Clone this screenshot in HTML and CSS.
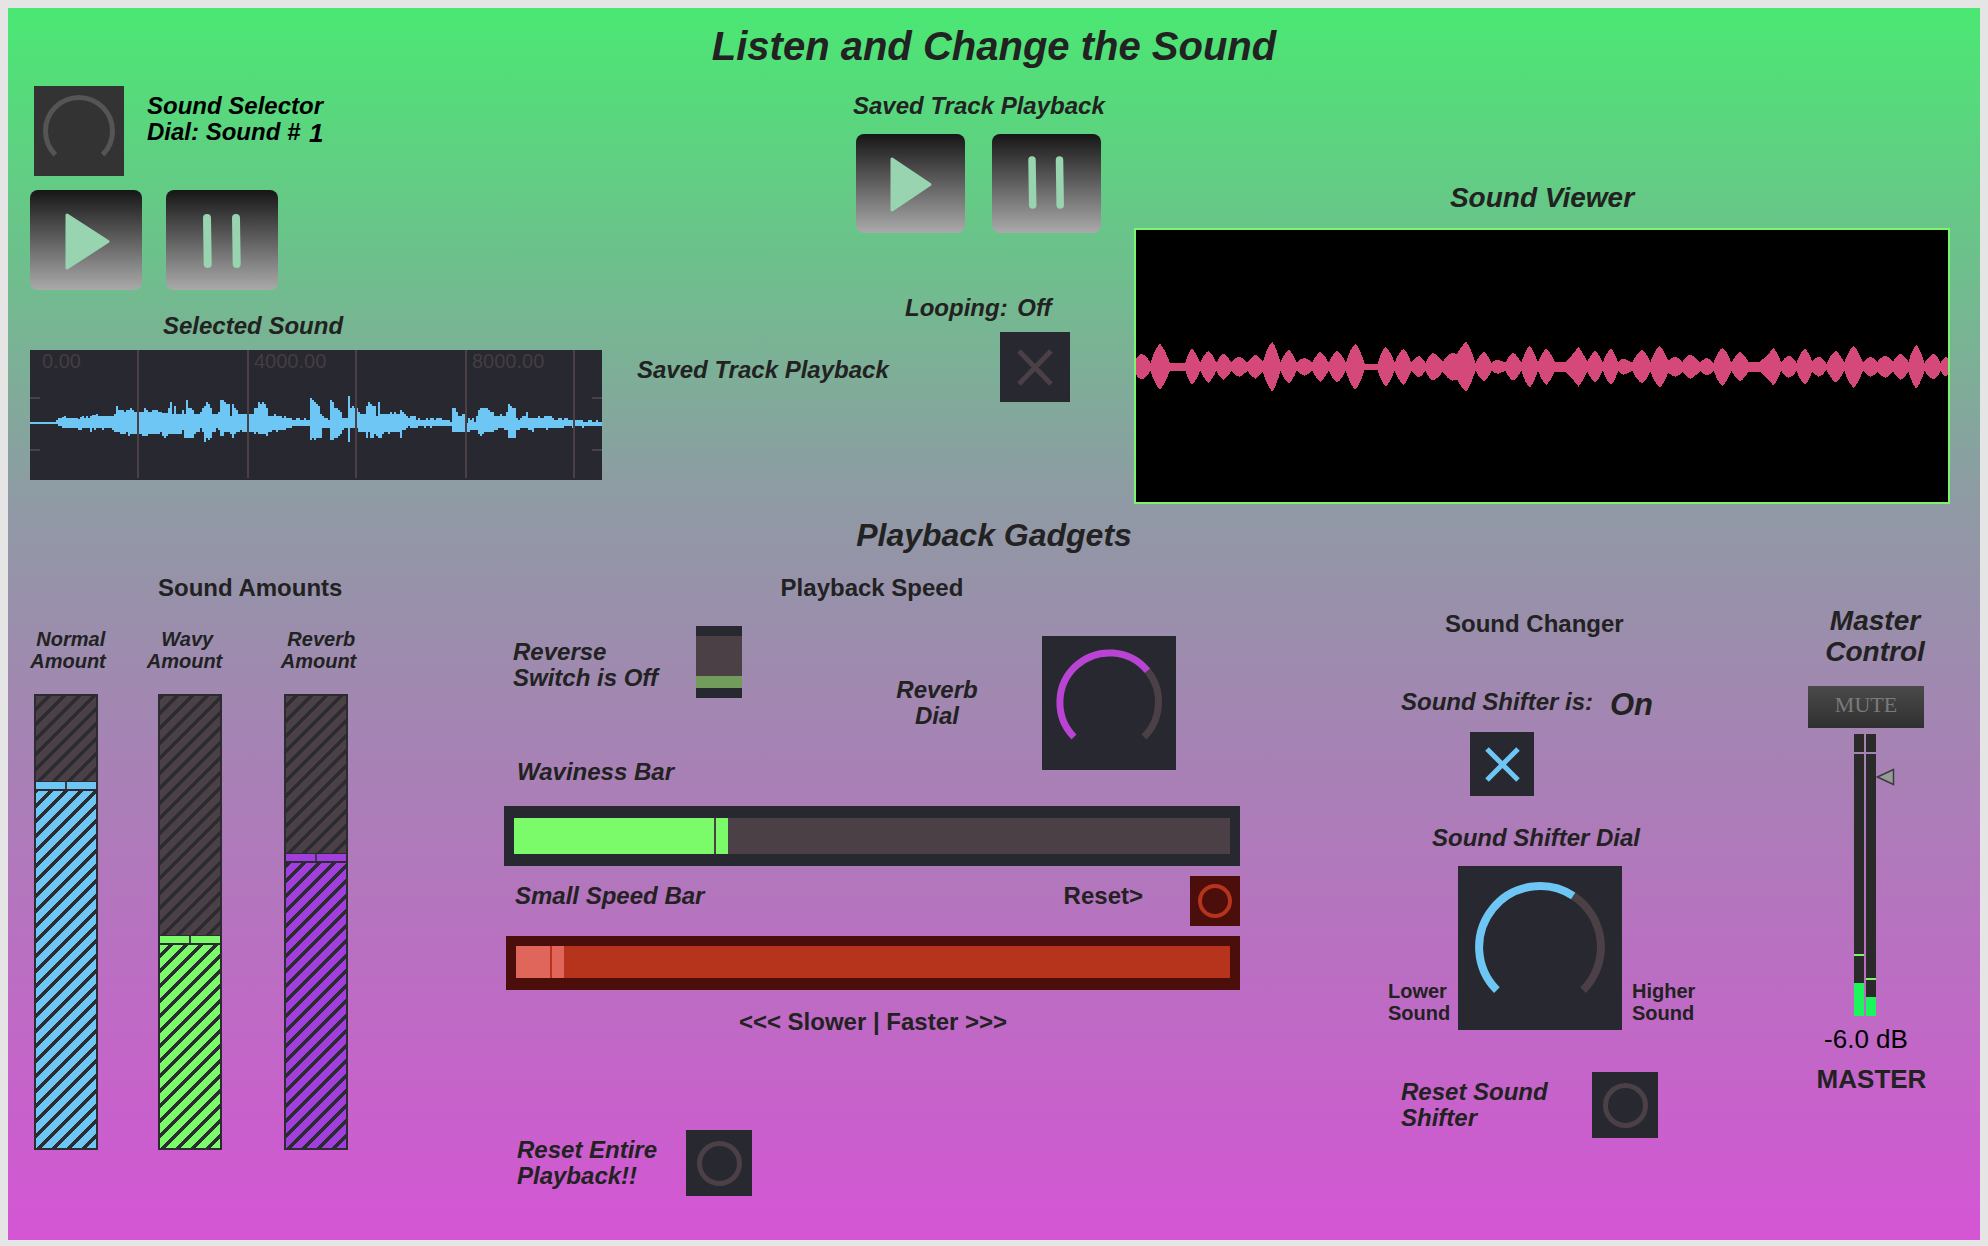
FILE: index.html
```html
<!DOCTYPE html>
<html lang="en">
<head>
    <meta charset="UTF-8">
    <title>Listen and Change the Sound</title>
    <link rel="stylesheet" href="styles.css">
</head>
<body>
<main class="panel">
    <h1 class="title">Listen and Change the Sound</h1>

    <section class="top-row">
        <div class="col-selector">
            <div class="selector">
                <svg class="selector-dial" viewBox="0 0 90 90"><path d="M21.3 68.7A33.5 33.5 0 1 1 68.7 68.7" fill="none" stroke="#555" stroke-width="5"/></svg>
                <p class="selector-text">Sound Selector<br>Dial: Sound # <span class="selector-num">1</span></p>
            </div>
            <div class="transport">
                <button class="transport-btn"><svg viewBox="0 0 112 100"><polygon points="37,25 78,51.5 37,78" fill="#98d4b0" stroke="#98d4b0" stroke-width="3" stroke-linejoin="round"/></svg></button>
                <button class="transport-btn"><svg viewBox="0 0 112 100"><path d="M41 28L41.700 74M70 28L70.700 74" stroke="#98d4b0" stroke-width="8" stroke-linecap="round"/></svg></button>
            </div>
            <h3 class="label selected-label">Selected Sound</h3>
            <svg class="wave" viewBox="0 0 572 130">
                <g fill="#6ec6f5" shape-rendering="crispEdges">
                    <path transform="translate(0,30) scale(.33333)" d="M0 126H78V120H84V114H96V111H102V108H108V114H144V117H150V111H156V108H162V114H168V108H174V114H180V108H186V105H198V102H204V108H252V102H258V78H264V90H282V96H288V90H300V84H306V90H312V96H342V84H348V90H354V96H366V90H384V96H396V98H414V84H420V66H426V102H432V78H438V102H456V90H462V102H468V60H474V84H486V90H492V102H510V96H516V84H522V78H528V66H534V72H540V84H546V102H564V96H570V60H582V66H588V72H600V108H606V72H612V84H618V90H624V102H672V84H684V66H690V72H696V66H702V72H708V84H714V108H732V102H738V108H756V114H762V108H768V114H786V120H798V114H810V120H822V114H828V120H840V54H846V60H852V66H858V72H864V78H870V174H858V180H852V174H846V180H840V138H786V144H768V150H744V156H738V150H726V156H714V168H708V162H684V156H678V162H672V156H636V150H630V156H618V162H612V174H606V162H600V156H582V168H570V150H564V144H558V156H546V174H540V180H534V174H528V186H522V156H516V144H510V156H498V162H492V174H462V150H456V162H414V168H408V174H402V168H396V156H390V162H354V168H336V162H300V168H294V156H288V162H270V156H252V150H246V144H222V150H216V144H198V150H192V144H186V156H180V144H156V150H144V144H96V138H84V132H0Z"/>
                    <path transform="translate(286,30) scale(.33333)" d="M0 78H6V84H12V102H18V108H24V114H36V120H42V60H48V66H54V84H66V90H72V96H78V114H96V48H102V84H108V78H114V84H126V96H132V102H150V78H156V66H162V72H168V78H180V108H186V66H192V102H222V96H228V102H234V96H240V102H252V90H258V96H264V102H270V108H276V114H282V108H300V120H306V114H312V120H330V114H336V120H342V114H354V120H360V114H378V120H402V126H408V84H420V96H426V108H438V102H446V130H456V114H462V120H468V114H474V126H480V108H486V90H492V84H516V90H522V96H534V108H552V102H558V108H570V96H576V72H582V78H588V84H600V114H606V120H612V114H618V108H630V96H636V114H666V108H672V114H684V108H708V114H714V120H726V114H738V120H744V114H756V120H800V126H816V120H828V126H840V120H846V126H858V138H804V144H798V138H774V144H768V138H744V144H696V150H690V144H654V156H648V150H636V144H612V150H600V174H576V150H564V144H546V150H534V156H504V162H498V168H492V162H486V150H462V156H408V138H348V144H342V138H330V144H324V138H306V144H282V138H276V144H270V150H258V174H252V156H222V162H216V156H204V162H198V174H186V168H180V162H174V174H162V156H156V174H150V156H126V144H102V186H96V144H84V150H78V162H72V168H66V174H54V180H42V144H18V174H12V168H0Z"/>
                </g>
                <path d="M108 0V128M218 0V128M326 0V128M436 0V128M544 0V128M0 48H10M0 100H10M562 48H572M562 100H572" stroke="#4a4045" stroke-width="2" fill="none"/>
                <text class="wave-num" x="12" y="18">0.00</text>
                <text class="wave-num" x="224" y="18">4000.00</text>
                <text class="wave-num" x="442" y="18">8000.00</text>
            </svg>
        </div>

        <div class="col-saved">
            <h3 class="label saved-label">Saved Track Playback</h3>
            <div class="transport transport-small">
                <button class="transport-btn"><svg viewBox="0 0 109 99"><polygon points="36,25 74,50.5 36,76" fill="#98d4b0" stroke="#98d4b0" stroke-width="3" stroke-linejoin="round"/></svg></button>
                <button class="transport-btn"><svg viewBox="0 0 109 99"><path d="M40 26L40.700 71M67.500 26L68.200 71" stroke="#98d4b0" stroke-width="7.500" stroke-linecap="round"/></svg></button>
            </div>
            <h3 class="label looping-label">Looping: <span class="looping-state">Off</span></h3>
            <div class="loop-row">
                <h3 class="label loop-text">Saved Track Playback</h3>
                <svg class="toggle toggle-loop" viewBox="0 0 70 70"><path d="M19 19L51 52M51 19L19 52" stroke="#4a4045" stroke-width="5"/></svg>
            </div>
        </div>

        <div class="col-viewer">
            <h3 class="label viewer-label">Sound Viewer</h3>
            <svg class="viewer" viewBox="0 0 812 272">
                <defs>
                    <path id="lobes" d="M29 0V-8Q33 -12 40 -13Q48 -11 55 -4Q63 -18 72 -23Q81 -18 90 -4H118Q124 -15 130 -18Q137 -15 145 -4Q152 -13 160 -16Q167 -13 174 -4Q180 -11 187 -13Q194 -11 201 -4Q208 -9 215 -10Q222 -9 230 -4Q237 -10 245 -12Q251 -10 258 -5Q266 -20 275 -25Q282 -20 290 -4Q297 -14 305 -17Q312 -14 319 -4Q326 -8 333 -9Q340 -8 347 -4Q354 -12 362 -15Q369 -12 377 -4Q384 -13 392 -16Q400 -13 408 -4Q416 -19 425 -23Q433 -19 442 -3H465Q472 -16 480 -20Q488 -16 496 -4Q504 -15 512 -18Q519 -15 526 -4Q533 -9 540 -11Q546 -9 552 -4Q558 -12 565 -14Q574 -12 583 -5Q591 -12 600 -14Q605 -13 609 -13Q617 -21 625 -25Q633 -20 642 -4Q650 -12 658 -15Q664 -12 671 -4Q677 -7 683 -7Q689 -6 696 -4Q703 -12 710 -14Q717 -12 725 -4Q732 -17 740 -21Q747 -17 755 -4Q762 -15 770 -18Q777 -15 785 -5H805Q818 -12 828 -20Q836 -14 844 -5Q851 -13 858 -16Q865 -13 872 -4Q879 -15 887 -18Q893 -15 900 -4Q905 -8 910 -8Q917 -7 925 -4Q934 -14 943 -17Q950 -14 958 -5Q966 -17 975 -21Q982 -17 990 -6Q996 -9 1003 -10Q1010 -9 1016 -5Q1023 -11 1030 -12Q1039 -10 1048 -4Q1054 -8 1060 -9Q1066 -8 1072 -4Q1080 -16 1088 -19Q1096 -16 1104 -4Q1112 -12 1120 -15Q1127 -12 1135 -5H1155Q1170 -11 1180 -19Q1187 -15 1194 -4Q1201 -10 1208 -11Q1215 -10 1222 -4Q1229 -15 1237 -18Q1244 -15 1250 -5Q1256 -9 1262 -10Q1269 -9 1276 -3Q1284 -13 1293 -16Q1300 -13 1308 -4Q1316 -17 1325 -21Q1333 -17 1342 -4Q1349 -9 1356 -10Q1362 -9 1368 -5Q1375 -10 1382 -11Q1389 -10 1396 -5Q1403 -11 1410 -13Q1417 -11 1424 -5Q1431 -18 1438 -22Q1445 -18 1453 -4Q1461 -11 1470 -13Q1476 -11 1482 -4Q1487 -9 1492 -10L1495 -8V0Z"/>
                </defs>
                <g transform="translate(-16,136.700) scale(.5537,1)" fill="#d4487a" shape-rendering="crispEdges">
                    <use href="#lobes"/>
                    <use href="#lobes" transform="scale(1,-1)"/>
                </g>
            </svg>
        </div>
    </section>

    <h2 class="gadgets-title">Playback Gadgets</h2>

    <section class="bottom-row">
        <div class="col-amounts">
            <h3 class="label plain amounts-title">Sound Amounts</h3>
            <div class="amount-labels">
                <span>&nbsp;Normal<br>Amount</span>
                <span>&nbsp;Wavy<br>Amount</span>
                <span>&nbsp;Reverb<br>Amount</span>
            </div>
            <div class="amount-sliders">
                <div class="slider slider-blue"><div class="slider-rest"></div><div class="slider-knob"></div><div class="slider-fill"></div></div>
                <div class="slider slider-green"><div class="slider-rest"></div><div class="slider-knob"></div><div class="slider-fill"></div></div>
                <div class="slider slider-purple"><div class="slider-rest"></div><div class="slider-knob"></div><div class="slider-fill"></div></div>
            </div>
        </div>

        <div class="col-speed">
            <h3 class="label plain speed-title">Playback Speed</h3>
            <div class="speed-top">
                <div class="speed-left">
                    <div class="reverse-row">
                        <p class="label reverse-text">Reverse<br>Switch is Off</p>
                        <div class="switch"><div class="switch-off"></div><div class="switch-on"></div></div>
                    </div>
                    <h3 class="label waviness-label">Waviness Bar</h3>
                </div>
                <p class="label reverb-text">Reverb<br>Dial</p>
                <svg class="reverb-dial" viewBox="0 0 134 134">
                    <path d="M105.500 34.800A49.500 49.500 0 0 1 102 101" fill="none" stroke="#4a4045" stroke-width="7"/>
                    <path d="M32 101A49.500 49.500 0 1 1 105.500 34.800" fill="none" stroke="#b944d4" stroke-width="7"/>
                </svg>
            </div>
            <div class="bar bar-wavy"><div class="bar-inner"><div class="bar-fill"><i></i></div></div></div>
            <div class="small-row">
                <h3 class="label small-label">Small Speed Bar</h3>
                <span class="label plain reset-small">Reset&gt;</span>
                <div class="ring-box ring-box-red"><div class="ring"></div></div>
            </div>
            <div class="bar bar-speed"><div class="bar-inner"><div class="bar-fill"><i></i></div></div></div>
            <p class="label plain slower">&lt;&lt;&lt; Slower | Faster &gt;&gt;&gt;</p>
            <div class="reset-row">
                <p class="label reset-entire">Reset Entire<br>Playback!!</p>
                <div class="ring-box"><div class="ring"></div></div>
            </div>
        </div>

        <div class="col-shifter">
            <h3 class="label plain changer-title">Sound Changer</h3>
            <div class="shifter-status">
                <span class="label">Sound Shifter is:</span>
                <span class="shifter-on">On</span>
            </div>
            <svg class="toggle toggle-shifter" viewBox="0 0 64 64"><path d="M17 17L48 48M48 17L17 48" stroke="#6ec6f5" stroke-width="5"/></svg>
            <h3 class="label shifter-label">Sound Shifter Dial</h3>
            <div class="shifter-dial-row">
                <span class="side-label side-lower">Lower<br>Sound</span>
                <svg class="shifter-dial" viewBox="0 0 164 164">
                    <path d="M115.200 29.800A61 61 0 0 1 125.100 124.100" fill="none" stroke="#4a4045" stroke-width="8"/>
                    <path d="M38.900 124.100A61 61 0 0 1 115.200 29.800" fill="none" stroke="#6ec6f5" stroke-width="8"/>
                </svg>
                <span class="side-label side-higher">Higher<br>Sound</span>
            </div>
            <div class="reset-shifter-row">
                <p class="label reset-shifter">Reset Sound<br>Shifter</p>
                <div class="ring-box"><div class="ring"></div></div>
            </div>
        </div>

        <div class="col-master">
            <h3 class="master-title">Master<br>Control</h3>
            <button class="mute">MUTE</button>
            <div class="meter">
                <div class="meter-channel">
                    <div class="meter-clip"></div>
                    <div class="meter-bar"><div class="meter-peak meter-peak-l"></div><div class="meter-level meter-level-l"></div></div>
                </div>
                <div class="meter-channel">
                    <div class="meter-clip"></div>
                    <div class="meter-bar"><div class="meter-peak meter-peak-r"></div><div class="meter-level meter-level-r"></div></div>
                </div>
                <svg class="meter-handle" viewBox="0 0 19 18"><polygon points="1.500,9 17.500,1.500 17.500,16.500" fill="#999" stroke="#3c3c3c" stroke-width="1.500"/></svg>
            </div>
            <p class="db-value">-6.0 dB</p>
            <p class="label plain master-name">MASTER</p>
        </div>
    </section>
</main>
</body>
</html>
```
FILE: styles.css
```css
/* General page */
html, body {
    margin: 0;
    padding: 0;
    height: 100%;
    overflow: hidden;
}

body {
    background: #e5e5e5;
    font-family: "Liberation Sans", Arial, sans-serif;
}

h1, h2, h3, p {
    margin: 0;
}

svg {
    display: block;
    flex: none;
}

.panel {
    width: 1972px;
    height: 1232px;
    margin: 8px 8px 6px;
    padding-top: 10px;
    box-sizing: border-box;
    background: linear-gradient(180deg, #4ae873 0%, #8f9aa4 40%, #d455d4 100%);
    color: #222;
}

.title {
    font: italic bold 40px/56px "Liberation Sans", Arial, sans-serif;
    text-align: center;
}

.label {
    font: italic bold 24px/30px "Liberation Sans", Arial, sans-serif;
    white-space: nowrap;
    color: #222;
}

.label.plain {
    font-style: normal;
}

/* Top row */
.top-row {
    display: flex;
    height: 441px;
    padding-left: 22px;
}

.col-selector {
    width: 572px;
    padding-top: 12px;
}

.selector {
    display: flex;
    margin-left: 4px;
}

.selector-dial {
    width: 90px;
    height: 90px;
    background: #333;
}

.selector-text {
    margin: 7px 0 0 23px;
    font: italic bold 24px/26px "Liberation Sans", Arial, sans-serif;
    color: #000;
    white-space: nowrap;
}

.selector-num {
    font-size: 26px;
    margin-left: 2px;
    vertical-align: -2px;
}

.transport {
    display: flex;
    gap: 24px;
    margin-top: 14px;
}

.transport-btn {
    width: 112px;
    height: 100px;
    padding: 0;
    border: none;
    border-radius: 8px;
    background: linear-gradient(180deg, #161616, #aaa);
}

.selected-label {
    margin: 21px 0 0 133px;
}

.wave {
    width: 572px;
    height: 130px;
    margin-top: 9px;
    background: #282830;
}

.wave-num {
    font: 20px "Liberation Sans", Arial, sans-serif;
    fill: #453d42;
}

.col-saved {
    width: 467px;
    margin-left: 35px;
    padding-top: 17px;
}

.saved-label {
    margin-left: 216px;
}

.transport-small {
    gap: 27px;
    margin: 13px 0 0 219px;
}

.transport-small .transport-btn {
    width: 109px;
    height: 99px;
}

.looping-label {
    margin: 60px 0 0 268px;
}

.looping-state {
    margin-left: 3px;
}

.loop-row {
    display: flex;
    margin-top: 9px;
}

.loop-text {
    width: 363px;
    margin-top: 23px;
}

.toggle {
    background: #282830;
}

.toggle-loop {
    width: 70px;
    height: 70px;
}

.col-viewer {
    width: 816px;
    margin-left: 30px;
    padding-top: 109px;
}

.viewer-label {
    font-size: 28px;
    text-align: center;
}

.viewer {
    width: 816px;
    height: 276px;
    margin-top: 15px;
    box-sizing: border-box;
    border: 2px solid #7cf56c;
    background: #000;
}

.gadgets-title {
    font: italic bold 32px/40px "Liberation Sans", Arial, sans-serif;
    text-align: center;
}

/* Bottom row */
.bottom-row {
    display: flex;
    padding-left: 22px;
}

.col-amounts {
    width: 474px;
    padding-top: 18px;
}

.amounts-title {
    margin-left: 128px;
}

.amount-labels {
    display: flex;
    margin: 25px 0 0 -2px;
    font: italic bold 20px/22px "Liberation Sans", Arial, sans-serif;
    text-align: center;
}

.amount-labels span {
    width: 80px;
    white-space: nowrap;
}

.amount-labels span:nth-child(2) {
    margin-left: 36.500px;
}

.amount-labels span:nth-child(3) {
    margin-left: 54px;
}

.amount-sliders {
    display: flex;
    margin: 22px 0 0 4px;
}

.slider {
    display: flex;
    flex-direction: column;
    width: 64px;
    height: 456px;
    box-sizing: border-box;
    border: 2px solid #2b2b31;
}

.slider-green {
    margin-left: 60px;
}

.slider-purple {
    margin-left: 62px;
}

.slider-rest {
    flex: 1;
    background: repeating-linear-gradient(-45deg, #4a4045 0 7px, #2b2b31 7px 10.600px);
}

.slider-knob {
    height: 10px;
    box-sizing: border-box;
    border-top: 1px solid #2b2b31;
    border-bottom: 2px solid #2b2b31;
    background: linear-gradient(90deg, var(--slider) 0 calc(50% - 1px), #3c3c44 calc(50% - 1px) calc(50% + 1px), var(--slider) calc(50% + 1px));
}

.slider-fill {
    background: repeating-linear-gradient(-45deg, var(--slider) 0 7px, #2b2b31 7px 10.600px);
}

.slider-blue {
    --slider: #6ec6f5;
}

.slider-green {
    --slider: #7cfb6a;
}

.slider-purple {
    --slider: #a03fdc;
}

.slider-blue .slider-fill {
    height: 357px;
}

.slider-green .slider-fill {
    height: 203px;
}

.slider-purple .slider-fill {
    height: 285px;
}

.col-speed {
    width: 736px;
    padding-top: 18px;
}

.speed-title {
    text-align: center;
}

.speed-top {
    display: flex;
    align-items: flex-start;
    margin-top: 23px;
}

.speed-left {
    width: 238px;
}

.reverse-row {
    display: flex;
    height: 72px;
}

.reverse-text {
    width: 183px;
    margin: 13px 0 0 9px;
    line-height: 26px;
}

.switch {
    width: 46px;
    height: 72px;
    padding: 10px 0;
    box-sizing: border-box;
    background: #282830;
}

.switch-off {
    height: 40px;
    background: #4a4045;
}

.switch-on {
    height: 12px;
    background: #729c5c;
}

.waviness-label {
    margin: 59px 0 0 13px;
}

.reverb-text {
    width: 120px;
    margin: 51px 0 0 135px;
    line-height: 26px;
    text-align: center;
}

.reverb-dial {
    width: 134px;
    height: 134px;
    margin: 10px 0 0 45px;
    background: #282830;
}

.bar {
    box-sizing: border-box;
}

.bar-wavy {
    height: 60px;
    margin-top: 19px;
    padding: 12px 10px;
    background: #282830;
}

.bar-inner {
    height: 100%;
}

.bar-wavy .bar-inner {
    background: #4a4045;
}

.bar-fill {
    height: 100%;
    display: flex;
    justify-content: flex-end;
}

.bar-wavy .bar-fill {
    width: 214px;
    background: #7cfb6a;
}

.bar-wavy .bar-fill i {
    width: 2px;
    margin-right: 12px;
    background: #4a4045;
}

.small-row {
    display: flex;
    margin-top: 10px;
}

.small-label {
    margin: 5px 0 0 11px;
}

.reset-small {
    margin: 5px 47px 0 auto;
}

.ring-box {
    display: flex;
    align-items: center;
    justify-content: center;
    width: 66px;
    height: 66px;
    background: #282830;
}

.ring {
    width: 45px;
    height: 45px;
    box-sizing: border-box;
    border: 5px solid #4a4045;
    border-radius: 50%;
}

.ring-box-red {
    width: 50px;
    height: 50px;
    background: #4c0e0a;
}

.ring-box-red .ring {
    width: 34px;
    height: 34px;
    border: 4px solid #b6341c;
}

.bar-speed {
    height: 54px;
    margin: 10px 0 0 2px;
    padding: 10px 10px 12px;
    background: #4c0e0a;
}

.bar-speed .bar-inner {
    background: #b6341c;
}

.bar-speed .bar-fill {
    width: 48px;
    background: #e0665c;
}

.bar-speed .bar-fill i {
    width: 2px;
    margin-right: 12px;
    background: #b6341c;
}

.slower {
    margin: 17px 0 0 2px;
    text-align: center;
}

.reset-row {
    display: flex;
    margin-top: 93px;
}

.reset-entire {
    width: 169px;
    margin: 7px 0 0 13px;
    line-height: 26px;
}

.col-shifter {
    width: 420px;
    margin-left: 148px;
}

.changer-title {
    margin: 54px 0 0 57px;
}

.shifter-status {
    display: flex;
    margin: 48px 0 0 13px;
}

.shifter-on {
    margin-left: 17px;
    font: italic bold 31px/36px "Liberation Sans", Arial, sans-serif;
}

.toggle-shifter {
    width: 64px;
    height: 64px;
    margin: 9px 0 0 82px;
}

.shifter-label {
    margin: 27px 0 0 44px;
}

.shifter-dial-row {
    display: flex;
    align-items: flex-start;
    margin-top: 13px;
}

.shifter-dial {
    width: 164px;
    height: 164px;
    background: #282830;
}

.side-label {
    margin-top: 114px;
    font: bold 20px/22px "Liberation Sans", Arial, sans-serif;
    color: #222;
}

.side-lower {
    width: 70px;
}

.side-higher {
    margin-left: 10px;
}

.reset-shifter-row {
    display: flex;
    margin-top: 42px;
}

.reset-shifter {
    width: 191px;
    margin: 7px 0 0 13px;
    line-height: 26px;
}

.col-master {
    width: 134px;
}

.master-title {
    margin-top: 50px;
    font: italic bold 28px/31px "Liberation Sans", Arial, sans-serif;
    text-align: center;
}

.mute {
    display: block;
    width: 116px;
    height: 42px;
    margin-top: 19px;
    padding: 0 0 4px;
    border: none;
    background: linear-gradient(180deg, #4a4a4a, #303030);
    font: 22px "Liberation Serif", "Times New Roman", serif;
    color: #7a7a7a;
}

.meter {
    position: relative;
    display: flex;
    gap: 2px;
    width: 22px;
    margin: 6px 0 0 46px;
}

.meter-channel {
    width: 10px;
}

.meter-clip {
    height: 18px;
    margin-bottom: 2px;
    background: #2a2a2a;
}

.meter-bar {
    display: flex;
    flex-direction: column;
    justify-content: flex-end;
    height: 262px;
    background: #2a2a2a;
}

.meter-peak {
    height: 2px;
    background: #7cf56c;
}

.meter-peak-l {
    margin-bottom: 27px;
}

.meter-peak-r {
    margin-bottom: 17px;
}

.meter-level {
    background: #1cf55c;
}

.meter-level-l {
    height: 33px;
}

.meter-level-r {
    height: 19px;
}

.meter-handle {
    position: absolute;
    left: 22px;
    top: 34px;
    width: 19px;
    height: 18px;
}

.db-value {
    width: 116px;
    margin-top: 8px;
    font: 26px/30px "Liberation Sans", Arial, sans-serif;
    color: #000;
    text-align: center;
}

.master-name {
    width: 127px;
    margin-top: 10px;
    font-size: 26px;
    text-align: center;
}
```
